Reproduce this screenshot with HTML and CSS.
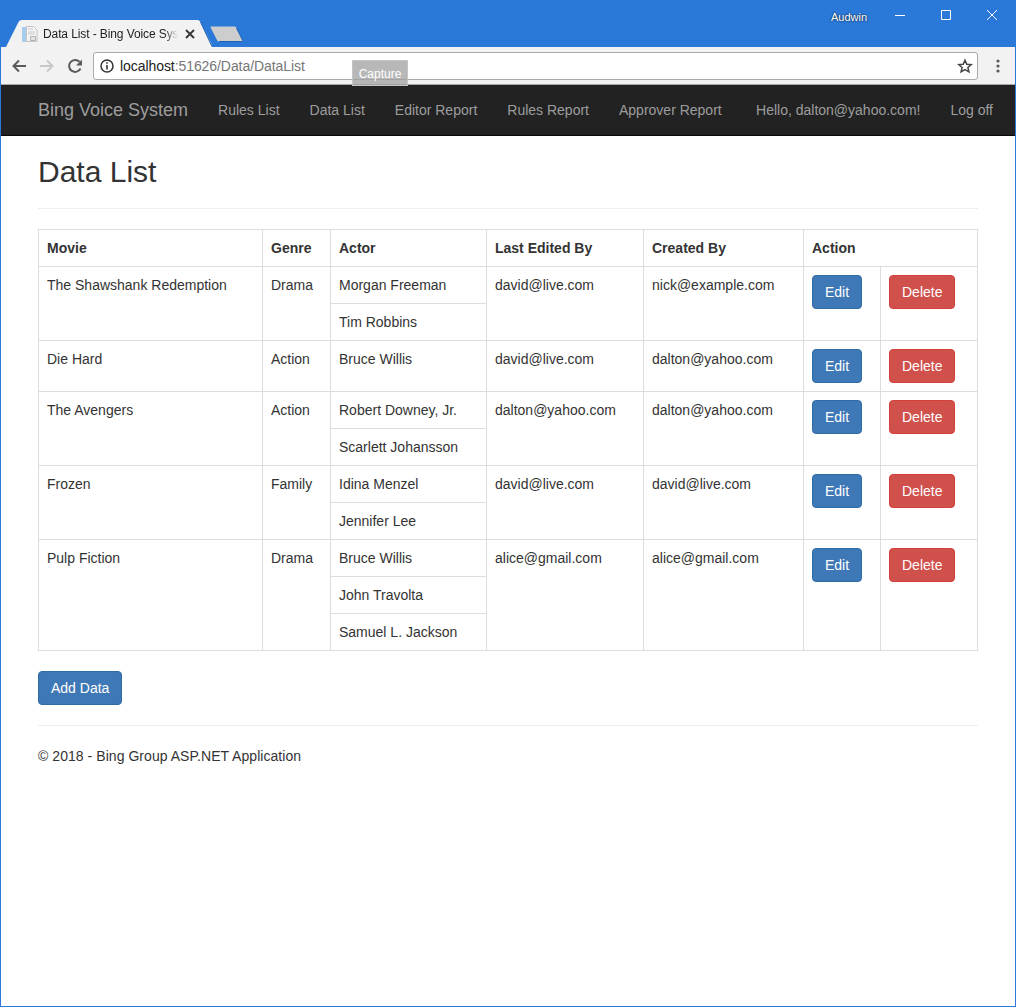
FILE: index.html
```html
<!DOCTYPE html>
<html lang="en">
<head>
<meta charset="utf-8">
<title>Data List - Bing Voice System</title>
<link rel="stylesheet" href="styles.css">
</head>
<body>
<div class="window">
  <div class="titlebar">
    <div class="tabs">
      <div class="tab">
        <svg class="tab-shape" width="206" height="28" viewBox="0 0 206 28"><path d="M0 28L12.500 3C13.500 1.500 14.500 1 16.500 1H191C192.500 1 193.500 1.500 194.500 3L207 28Z" fill="#f2f2f2"/><path d="M194.500 3L206 27.500" fill="none" stroke="#1c5fb0"/></svg>
        <svg class="favicon" width="16" height="16" viewBox="0 0 16 16"><path d="M0 1h5v15H0z" fill="#a9cdee"/><path d="M4.500 .5h7l3.500 3.500v11.500H4.500z" fill="#f5f5f5" stroke="#c4c4c4"/><path d="M6 3h5M6 6h7M6 8h7" stroke="#c9c9c9"/><path d="M8.500 10.500h5v4h-5z" fill="#e4e4e4" stroke="#b0b0b0"/></svg>
        <span class="tab-title">Data List - Bing Voice System</span>
        <svg class="tab-close" width="10" height="10" viewBox="0 0 10 10"><path d="M1 1l8 8M9 1l-8 8" stroke="#333" stroke-width="1.800"/></svg>
      </div>
      <svg class="new-tab" width="34" height="17" viewBox="0 0 34 17"><path d="M1.500 .5H24.500C25.500 .5 26 1 26.500 2L32.500 14C33 15 32.500 15.500 31.500 15.500H9C8 15.500 7.500 15 7 14L.8 2C.4 1 .6 .5 1.500 .5Z" fill="#cdcdcd"/><path d="M26.500 2L32.500 14C33 15 32.500 15.500 31.500 15.500H9" fill="none" stroke="#1c5fb0"/></svg>
    </div>
    <div class="win-controls">
      <span class="user">Audwin</span>
      <svg class="win-btn" width="46" height="12" viewBox="0 0 46 12"><path d="M18 6.500h10" stroke="#fff"/></svg>
      <svg class="win-btn" width="46" height="12" viewBox="0 0 46 12"><path d="M18.500 1.500h9v9h-9z" fill="none" stroke="#fff"/></svg>
      <svg class="win-btn" width="46" height="12" viewBox="0 0 46 12"><path d="M18 1l10 10M28 1L18 11" stroke="#fff"/></svg>
    </div>
  </div>
  <div class="toolbar">
    <svg class="tool-icon" width="16" height="16" viewBox="0 0 16 16"><path d="M15 8H2.500M8 2.500L2.500 8l5.500 5.500" fill="none" stroke="#5a5a5a" stroke-width="2"/></svg>
    <svg class="tool-icon" width="16" height="16" viewBox="0 0 16 16"><path d="M1 8h12.500M8 2.500L13.500 8 8 13.500" fill="none" stroke="#c8c8c8" stroke-width="2"/></svg>
    <svg class="tool-icon" width="16" height="16" viewBox="0 0 16 16"><path d="M13.500 10.500A6 6 0 1 1 12.500 3.800" fill="none" stroke="#5a5a5a" stroke-width="2"/><path d="M15 1.500v6H9z" fill="#5a5a5a"/></svg>
    <div class="omnibox">
      <svg class="info" width="14" height="14" viewBox="0 0 14 14"><circle cx="7" cy="7" r="6" fill="none" stroke="#333" stroke-width="1.500"/><path d="M7 6v4.500M7 3.300v1.500" stroke="#333" stroke-width="1.600"/></svg>
      <span class="url"><span class="host">localhost</span>:51626/Data/DataList</span>
      <svg class="star" width="16" height="16" viewBox="0 0 16 16"><path d="M8 2.200l1.800 4 4.400.4-3.300 2.900 1 4.300L8 11.500l-3.900 2.300 1-4.300-3.300-2.900 4.400-.4z" fill="none" stroke="#444" stroke-width="1.500"/></svg>
    </div>
    <svg class="menu-dots" width="4" height="14" viewBox="0 0 4 14"><circle cx="2" cy="2" r="1.600" fill="#5a5a5a"/><circle cx="2" cy="7" r="1.600" fill="#5a5a5a"/><circle cx="2" cy="12" r="1.600" fill="#5a5a5a"/></svg>
    <div class="capture">Capture</div>
  </div>
  <nav class="navbar">
    <a class="brand">Bing Voice System</a>
    <a class="nav-link">Rules List</a>
    <a class="nav-link">Data List</a>
    <a class="nav-link">Editor Report</a>
    <a class="nav-link">Rules Report</a>
    <a class="nav-link">Approver Report</a>
    <span class="nav-right">
      <a class="nav-user">Hello, dalton@yahoo.com!</a>
      <a class="nav-off">Log off</a>
    </span>
  </nav>
  <main class="content">
    <h2 class="page-title">Data List</h2>
    <hr class="rule title-rule">
    <table class="data-table">
      <colgroup>
        <col class="c-movie"><col class="c-genre"><col class="c-actor"><col class="c-edited"><col class="c-created"><col class="c-edit"><col class="c-del">
      </colgroup>
      <thead>
        <tr><th>Movie</th><th>Genre</th><th>Actor</th><th>Last Edited By</th><th>Created By</th><th colspan="2">Action</th></tr>
      </thead>
      <tbody>
        <tr>
          <td rowspan="2">The Shawshank Redemption</td><td rowspan="2">Drama</td><td>Morgan Freeman</td><td rowspan="2">david@live.com</td><td rowspan="2">nick@example.com</td>
          <td rowspan="2"><a class="btn btn-primary">Edit</a></td><td rowspan="2"><a class="btn btn-danger">Delete</a></td>
        </tr>
        <tr><td>Tim Robbins</td></tr>
        <tr class="single">
          <td>Die Hard</td><td>Action</td><td>Bruce Willis</td><td>david@live.com</td><td>dalton@yahoo.com</td>
          <td><a class="btn btn-primary">Edit</a></td><td><a class="btn btn-danger">Delete</a></td>
        </tr>
        <tr>
          <td rowspan="2">The Avengers</td><td rowspan="2">Action</td><td>Robert Downey, Jr.</td><td rowspan="2">dalton@yahoo.com</td><td rowspan="2">dalton@yahoo.com</td>
          <td rowspan="2"><a class="btn btn-primary">Edit</a></td><td rowspan="2"><a class="btn btn-danger">Delete</a></td>
        </tr>
        <tr><td>Scarlett Johansson</td></tr>
        <tr>
          <td rowspan="2">Frozen</td><td rowspan="2">Family</td><td>Idina Menzel</td><td rowspan="2">david@live.com</td><td rowspan="2">david@live.com</td>
          <td rowspan="2"><a class="btn btn-primary">Edit</a></td><td rowspan="2"><a class="btn btn-danger">Delete</a></td>
        </tr>
        <tr><td>Jennifer Lee</td></tr>
        <tr>
          <td rowspan="3">Pulp Fiction</td><td rowspan="3">Drama</td><td>Bruce Willis</td><td rowspan="3">alice@gmail.com</td><td rowspan="3">alice@gmail.com</td>
          <td rowspan="3"><a class="btn btn-primary">Edit</a></td><td rowspan="3"><a class="btn btn-danger">Delete</a></td>
        </tr>
        <tr><td>John Travolta</td></tr>
        <tr><td>Samuel L. Jackson</td></tr>
      </tbody>
    </table>
    <a class="btn btn-primary add-btn">Add Data</a>
    <hr class="rule footer-rule">
    <footer class="footer">© 2018 - Bing Group ASP.NET Application</footer>
  </main>
</div>
</body>
</html>
```
FILE: styles.css
```css
* { box-sizing: border-box; }
html, body { margin: 0; padding: 0; }
body { font-family: "Liberation Sans", Arial, sans-serif; font-size: 14px; line-height: 20px; color: #333; background: #fff; }
.window { height: 1007px; border: 1px solid #2a78d8; overflow: hidden; }
.titlebar { height: 46px; background: #2a78d8; display: flex; justify-content: space-between; }
.tabs { display: flex; align-items: flex-end; padding-left: 5px; }
.tab { position: relative; width: 206px; height: 28px; display: flex; align-items: center; padding: 1px 0 0 16px; }
.tab-shape { position: absolute; left: 0; top: 0; }
.favicon { position: relative; flex: none; }
.tab-title { position: relative; width: 135px; margin-left: 5px; font-size: 12px; letter-spacing: -.1px; white-space: nowrap; overflow: hidden; color: #222; -webkit-mask-image: linear-gradient(to right, #000 90%, transparent); mask-image: linear-gradient(to right, #000 90%, transparent); }
.tab-close { position: relative; margin-left: 7px; flex: none; }
.new-tab { margin-left: -2px; margin-bottom: 4px; flex: none; }
.win-controls { display: flex; align-items: flex-start; padding-top: 8px; }
.user { font-size: 11px; line-height: 14px; color: #fff; text-shadow: 0 0 2px #000; width: 38px; margin-top: 1px; }
.win-controls .win-btn:nth-child(2) { margin-left: 8px; }
.toolbar { position: relative; height: 38px; background: #f2f2f2; border-bottom: 1px solid #a8a8a8; display: flex; align-items: center; padding-left: 10px; }
.tool-icon { flex: none; margin-right: 12px; }
.omnibox { width: 885px; height: 28px; margin-left: -2px; background: #fff; border: 1px solid #a9a9a9; border-radius: 3px; display: flex; align-items: center; padding: 0 4px 0 6px; }
.info { flex: none; }
.url { margin-left: 6px; font-size: 14px; letter-spacing: -.07px; color: #767676; flex: 1; }
.host { color: #222; }
.star { flex: none; }
.menu-dots { margin-left: 18px; flex: none; }
.capture { position: absolute; left: 351px; top: 13px; width: 56px; height: 26px; background: rgba(160,160,160,.75); border: 1px solid #c4c4c4; color: #fff; font-size: 12px; line-height: 26px; text-align: center; }
.navbar { height: 51px; background: #222; border-bottom: 1px solid #080808; display: flex; align-items: center; padding-left: 37px; padding-right: 22px; white-space: nowrap; }
.navbar a { color: #9d9d9d; }
.brand { font-size: 18px; margin-right: 30px; }
.nav-link { margin-right: 30px; }
.nav-right { margin-left: auto; display: flex; gap: 30px; }
.content { padding: 0 37px; }
.page-title { font-size: 30px; font-weight: 500; line-height: 33px; margin: 19px 0 0; color: #333; }
.rule { border: 0; border-top: 1px solid #eee; margin: 0; }
.title-rule { margin-top: 20px; margin-bottom: 20px; }
.data-table { width: 939px; table-layout: fixed; border-collapse: collapse; }
.c-movie { width: 224px; } .c-genre { width: 68px; } .c-actor { width: 156px; } .c-edited { width: 157px; } .c-created { width: 160px; } .c-edit { width: 77px; } .c-del { width: 97px; }
.data-table th, .data-table td { border: 1px solid #ddd; padding: 8px; vertical-align: top; text-align: left; height: 37px; }
.data-table th { font-weight: bold; }
.single td { height: 51px; }
.btn { display: inline-block; padding: 6px 12px; font-size: 14px; line-height: 20px; border: 1px solid transparent; border-radius: 4px; color: #fff; }
.btn-primary { background: #3f78b6; border-color: #2e6da4; }
.btn-danger { background: #d0504c; border-color: #d43f3a; }
.add-btn { margin-top: 20px; }
.footer-rule { margin-top: 20px; }
.footer { margin-top: 20px; letter-spacing: .05px; }
```
